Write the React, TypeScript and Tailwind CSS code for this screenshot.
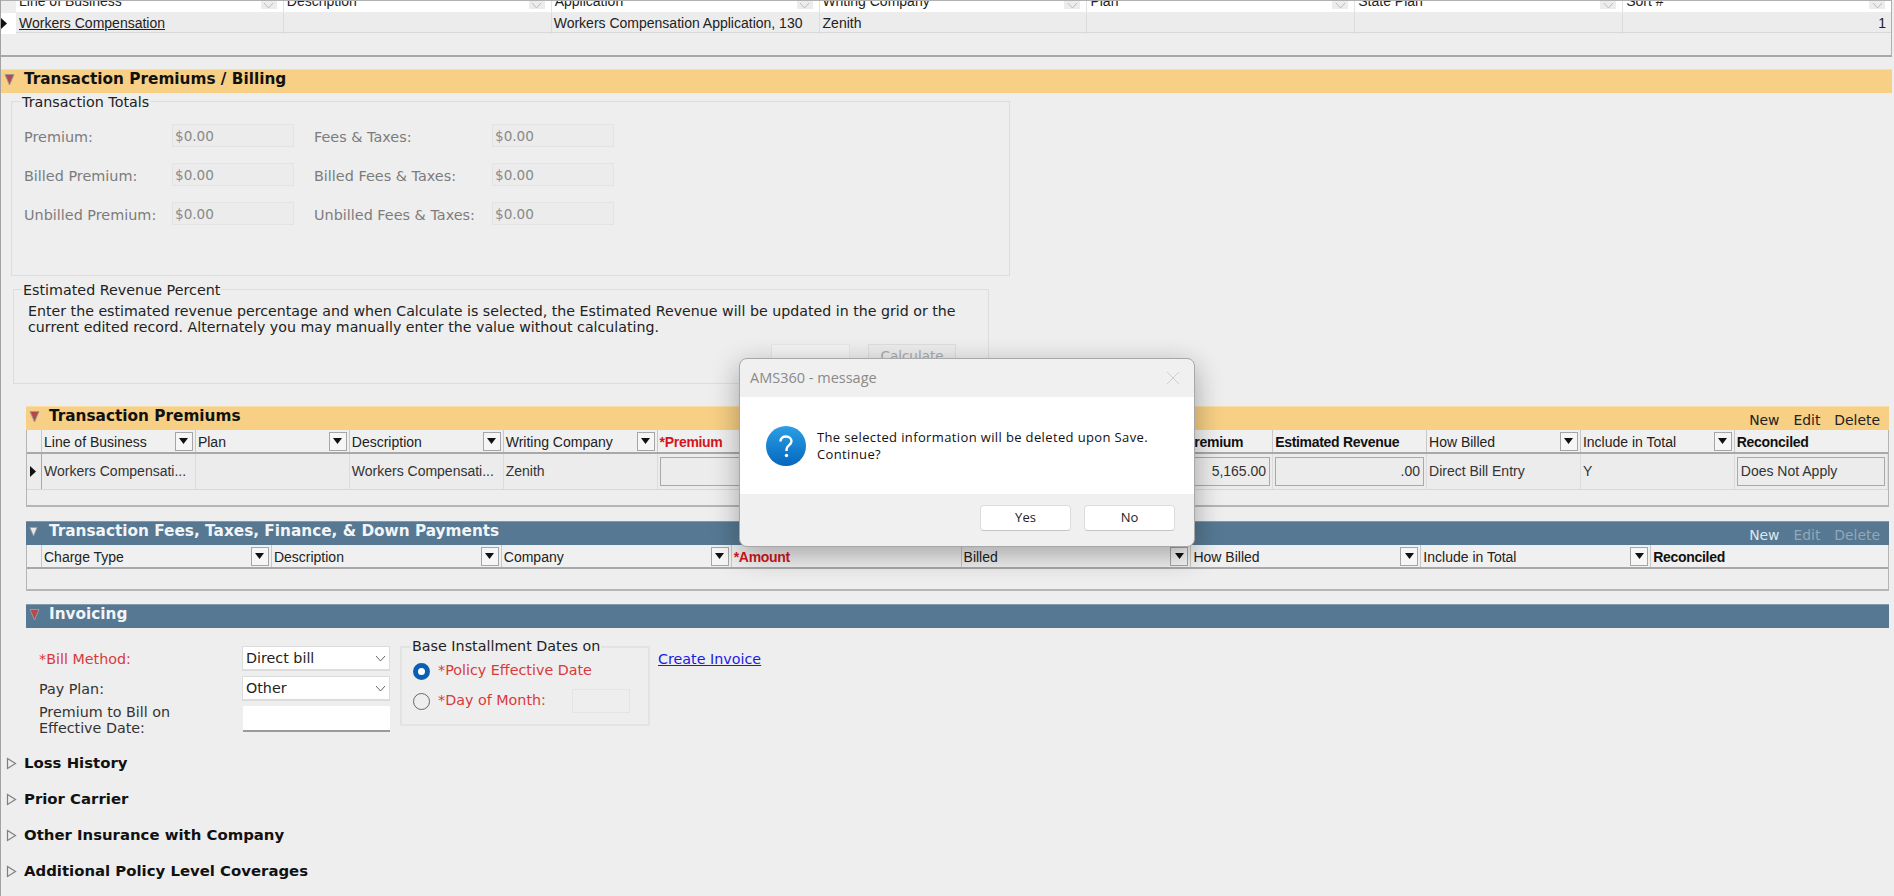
import React from "react";

const Tri = ({ fill = "#b5484a", small }: { fill?: string; small?: boolean }) => (
  <svg width={small ? 9 : 11} height={small ? 11 : 13} viewBox="0 0 11 13">
    <path d="M1 1.5 H10 L5.5 12 Z" fill={fill} stroke="#9a9a9a" strokeWidth="1" />
  </svg>
);

const Open = () => (
  <svg width="11" height="13" viewBox="0 0 11 13" className="shrink-0">
    <path d="M1.5 1.5 L9.5 6.5 L1.5 11.5 Z" fill="#eeeeee" stroke="#7f7f7f" strokeWidth="1.2" />
  </svg>
);

const Filter = () => (
  <span className="flex h-[19px] w-[18px] shrink-0 items-center justify-center border border-[#a6a6a6] bg-[#f6f6f6]">
    <svg width="9" height="6" viewBox="0 0 9 6"><path d="M0 0 H9 L4.5 6 Z" fill="#111" /></svg>
  </span>
);

const Chevron = ({ c = "#666" }: { c?: string }) => (
  <svg width="11" height="7" viewBox="0 0 11 7" fill="none" stroke={c} strokeWidth="1"><path d="M1 1 L5.5 6 L10 1" /></svg>
);

const Caret = () => (
  <svg width="6" height="11" viewBox="0 0 6 11"><path d="M0 0 L6 5.5 L0 11 Z" fill="#111" /></svg>
);

const Input = ({ v }: { v: string }) => (
  <div className="flex h-[23px] w-[122px] items-center border border-[#e3e3e3] bg-[#ececec] pl-[2px] pt-[1px] font-['DejaVu_Sans',sans-serif] text-[13.6px] text-[#8a8a8a]">{v}</div>
);

const Label = ({ t }: { t: string }) => (
  <div className="flex h-[23px] items-center pt-[4px] font-['DejaVu_Sans',sans-serif] text-[14.4px] text-[#7c7c7c]">{t}</div>
);

type Col = { t: string; f?: boolean; b?: boolean; r?: boolean; e?: boolean };

const HeadCell = ({ c }: { c: Col }) => (
  <div className={"flex h-[22px] items-center overflow-hidden border-r border-[#c8c8c8] pl-[2px] last:border-r-0 " + (c.e ? "justify-end pr-[29px]" : "justify-between pr-[2px]")}>
    <span className={"mt-[3px] whitespace-nowrap text-[14px] " + (c.r ? "font-bold tracking-[-0.3px] text-[#d3161c]" : c.b ? "font-bold tracking-[-0.3px] text-[#111]" : "text-[#222]")}>{c.t}</span>
    {c.f && <Filter />}
  </div>
);

const Band = ({ title, blue, tri, links }: { title: string; blue?: boolean; tri: React.ReactNode; links?: React.ReactNode }) => (
  <div className={"flex h-[24px] items-center justify-between border-t font-['DejaVu_Sans',sans-serif] " + (blue ? "border-[#7d9ab0] bg-[#567892]" : "border-[#f9dca6] bg-[#f7cf85]")}>
    <div className={"flex items-center " + (blue ? "-mt-[5px]" : "-mt-[4px]")}>
      <span className="flex w-[23px] pl-[3px]">{tri}</span>
      <span className={"text-[15.3px] font-bold " + (blue ? "text-[#f2f5f7]" : "text-[#111]")}>{title}</span>
    </div>
    {links}
  </div>
);

const Section = ({ title }: { title: string }) => (
  <div className="flex h-[36px] items-center gap-[7px] pl-[5px] font-['DejaVu_Sans',sans-serif]">
    <Open />
    <span className="text-[14.9px] font-bold text-[#111]">{title}</span>
  </div>
);

const premCols: Col[] = [
  { t: "Line of Business", f: true },
  { t: "Plan", f: true },
  { t: "Description", f: true },
  { t: "Writing Company", f: true },
  { t: "*Premium", r: true },
  { t: "" },
  { t: "" },
  { t: "Premium", b: true, e: true },
  { t: "Estimated Revenue", b: true },
  { t: "How Billed", f: true },
  { t: "Include in Total", f: true },
  { t: "Reconciled", b: true },
];

const feeCols: Col[] = [
  { t: "Charge Type", f: true },
  { t: "Description", f: true },
  { t: "Company", f: true },
  { t: "*Amount", r: true },
  { t: "Billed", f: true },
  { t: "How Billed", f: true },
  { t: "Include in Total", f: true },
  { t: "Reconciled", b: true },
];

const topCols = ["Line of Business", "Description", "Application", "Writing Company", "Plan", "State Plan", "Sort #"];

const Box = ({ t, right }: { t: string; right?: boolean }) => (
  <div className="flex h-full items-center border-r border-[#dcdcdc] px-[2px] py-[3px]">
    <div className={"flex h-full w-full items-center border border-[#a9a9a9] bg-[#ececec] px-[3px] text-[14px] text-[#333] " + (right ? "justify-end" : "")}>{t}</div>
  </div>
);

const Txt = ({ t }: { t: string }) => (
  <div className="flex h-full items-center overflow-hidden whitespace-nowrap border-r border-[#dcdcdc] pl-[2px] text-[14px] text-[#333]">{t}</div>
);

export default function App() {
  return (
    <div className="relative h-[896px] w-[1894px] overflow-hidden border-l border-[#a3a3a3] bg-[#eeeeee] font-['Liberation_Sans',Arial,sans-serif]">
      {/* top grid */}
      <div className="mr-[2px] h-[57px] overflow-hidden border-r border-b-2 border-t border-[#b0b0b0] border-b-[#a8a8a8]">
        <div className="grid h-[11px] grid-cols-[15px_repeat(7,1fr)] overflow-hidden bg-white">
          <div className="bg-[#eeeeee]" />
          {topCols.map((c) => (
            <div key={c} className="relative flex h-[11px] justify-between overflow-hidden border-r border-[#e2e2e2] pl-[3px] pr-[6px] last:border-r-0">
              <span className="-mt-[8px] whitespace-nowrap text-[14px] leading-[16px] text-[#222]">{c}</span>
              <span className="flex h-[8px] w-[16px] items-center justify-center bg-[#ececec]">
                <Chevron c="#bdbdbd" />
              </span>
            </div>
          ))}
        </div>
        <div className="grid h-[21px] grid-cols-[15px_repeat(7,1fr)] border-b border-[#d8d8d8] bg-[#ececec] pt-[1px] text-[14px] text-[#222]">
          <div className="flex items-center bg-white"><Caret /></div>
          <div className="flex items-center border-r border-[#dcdcdc] pl-[3px] underline">Workers Compensation</div>
          <div className="border-r border-[#dcdcdc]" />
          <div className="flex items-center border-r border-[#dcdcdc] pl-[2px]">Workers Compensation Application, 130</div>
          <div className="flex items-center border-r border-[#dcdcdc] pl-[3px]">Zenith</div>
          <div className="border-r border-[#dcdcdc]" />
          <div className="border-r border-[#dcdcdc]" />
          <div className="flex items-center justify-end pr-[5px]">1</div>
        </div>
      </div>

      {/* main band */}
      <div className="mr-[2px] mt-[12px]">
        <Band title="Transaction Premiums / Billing" tri={<Tri />} />
      </div>

      <div className="font-['DejaVu_Sans',sans-serif]">
        {/* totals */}
        <div className="ml-[10px] mt-[8px] h-[175px] w-[999px] border border-[#dddddd] pl-[12px]">
          <div className="-ml-[3px] -mt-[9px] h-[18px] w-fit bg-[#eeeeee] px-[1px] text-[14.3px] leading-[18px] text-[#222]">Transaction Totals</div>
          <div className="mt-[13px] grid grid-cols-[148px_122px_198px_122px] gap-y-[16px]">
            <Label t="Premium:" /><Input v="$0.00" />
            <div className="pl-[20px]"><Label t="Fees & Taxes:" /></div><Input v="$0.00" />
            <Label t="Billed Premium:" /><Input v="$0.00" />
            <div className="pl-[20px]"><Label t="Billed Fees & Taxes:" /></div><Input v="$0.00" />
            <Label t="Unbilled Premium:" /><Input v="$0.00" />
            <div className="pl-[20px]"><Label t="Unbilled Fees & Taxes:" /></div><Input v="$0.00" />
          </div>
        </div>

        {/* estimated */}
        <div className="ml-[12px] mt-[13px] h-[95px] w-[976px] border border-[#dddddd] pl-[14px]">
          <div className="-ml-[6px] -mt-[9px] h-[18px] w-fit bg-[#eeeeee] px-[1px] text-[14.3px] leading-[18px] text-[#222]">Estimated Revenue Percent</div>
          <p className="mt-[4px] w-[960px] text-[14.2px] leading-[16px] text-[#222]">
            Enter the estimated revenue percentage and when Calculate is selected, the Estimated Revenue will be updated in the grid or the current edited record. Alternately you may manually enter the value without calculating.
          </p>
          <div className="mt-[9px] flex gap-[18px] pl-[743px]">
            <div className="h-[24px] w-[79px] border border-[#e6e6e6] bg-[#f4f4f4]" />
            <div className="flex h-[24px] w-[88px] items-center justify-center border border-[#dddddd] bg-[#ececec] text-[13.5px] text-[#aaaaaa]">Calculate</div>
          </div>
        </div>
      </div>

      {/* premiums */}
      <div className="ml-[25px] mr-[5px] mt-[22px]">
        <Band
          title="Transaction Premiums"
          tri={<Tri />}
          links={
            <div className="mt-[3px] flex gap-[14px] pr-[9px] text-[13.9px] text-[#222]"><span>New</span><span>Edit</span><span>Delete</span></div>
          }
        />
        <div className="h-[77px] border-b-2 border-l border-r border-[#b5b5b5]">
          <div className="grid h-[24px] grid-cols-[15px_repeat(11,153.9px)_1fr] border-b-2 border-[#a8a8a8] bg-[#f0f0f0]">
            <div className="border-r border-[#c8c8c8]" />
            {premCols.map((c, i) => <HeadCell key={i} c={c} />)}
          </div>
          <div className="grid h-[36px] grid-cols-[15px_repeat(11,153.9px)_1fr] border-b border-[#d8d8d8] bg-[#ececec]">
            <div className="flex items-center border-r border-[#a8a8a8] pl-[3px]"><Caret /></div>
            <Txt t="Workers Compensati..." />
            <Txt t="" />
            <Txt t="Workers Compensati..." />
            <Txt t="Zenith" />
            <Box t="" right />
            <Box t="" right />
            <Box t="" right />
            <Box t="5,165.00" right />
            <Box t=".00" right />
            <Txt t="Direct Bill Entry" />
            <Txt t="Y" />
            <Box t="Does Not Apply" />
          </div>
        </div>
      </div>

      {/* fees */}
      <div className="ml-[25px] mr-[5px] mt-[14px]">
        <Band
          title="Transaction Fees, Taxes, Finance, & Down Payments"
          blue
          tri={<Tri fill="#e9e9e9" small />}
          links={
            <div className="mt-[3px] flex gap-[14px] pr-[9px] text-[13.9px] text-[#92a7b7]"><span className="text-[#dfe7ec]">New</span><span>Edit</span><span>Delete</span></div>
          }
        />
        <div className="h-[46px] border-b-2 border-l border-r border-[#b5b5b5]">
          <div className="grid h-[24px] grid-cols-[15px_repeat(7,229.9px)_1fr] border-b-2 border-[#a8a8a8] bg-[#f0f0f0]">
            <div className="border-r border-[#c8c8c8]" />
            {feeCols.map((c, i) => <HeadCell key={i} c={c} />)}
          </div>
        </div>
      </div>

      {/* invoicing */}
      <div className="ml-[25px] mr-[5px] mt-[13px]">
        <Band title="Invoicing" blue tri={<Tri />} />
      </div>

      <div className="ml-[38px] mt-[18px] flex items-start font-['DejaVu_Sans',sans-serif] text-[14.3px]">
        <div className="grid w-[351px] grid-cols-[203px_148px] gap-y-[5px]">
          <div className="flex h-[25px] items-center pt-[2px] text-[#d9393b]">*Bill Method:</div>
          <div className="flex h-[25px] items-center justify-between border border-b-2 border-[#dcdcdc] bg-white px-[3px] pt-[1px] text-[#222]">Direct bill<Chevron /></div>
          <div className="flex h-[25px] items-center pt-[2px] text-[#333]">Pay Plan:</div>
          <div className="flex h-[25px] items-center justify-between border border-b-2 border-[#dcdcdc] bg-white px-[3px] pt-[1px] text-[#222]">Other<Chevron /></div>
          <div className="-mt-[2px] w-[165px] leading-[16px] text-[#333]">Premium to Bill on Effective Date:</div>
          <div className="ml-[1px] h-[26px] w-[147px] border-b-2 border-[#9a9a9a] bg-white" />
        </div>
        <div className="ml-[10px] h-[80px] w-[250px] border-2 border-[#e3e3e3] pl-[11px]">
          <div className="-ml-[2px] -mt-[11px] h-[18px] w-fit bg-[#eeeeee] px-[1px] leading-[18px] text-[#222]">Base Installment Dates on</div>
          <div className="mt-[4px] flex h-[24px] items-center gap-[8px] text-[#d9393b]">
            <span className="h-[17px] w-[17px] rounded-full border-[5px] border-[#0a5fb4] bg-white" />*Policy Effective Date
          </div>
          <div className="mt-[6px] flex h-[24px] items-center gap-[8px] text-[#d9393b]">
            <span className="h-[17px] w-[17px] rounded-full border-[1.5px] border-[#666] bg-[#eeeeee]" />
            <span className="w-[126px]">*Day of Month:</span>
            <span className="h-[24px] w-[58px] border border-[#e4e4e4]" />
          </div>
        </div>
        <a className="ml-[8px] mt-[3px] text-[#1a1ae6] underline">Create Invoice</a>
      </div>

      <div className="mt-[9px]">
        <Section title="Loss History" />
        <Section title="Prior Carrier" />
        <Section title="Other Insurance with Company" />
        <Section title="Additional Policy Level Coverages" />
      </div>

      {/* dialog */}
      <div className="absolute left-[738px] top-[358px] flex h-[189px] w-[456px] flex-col overflow-hidden rounded-[8px] border border-[#a8a8a8] bg-[#f0f0f0] font-['Open_Sans',sans-serif] shadow-[0_8px_28px_rgba(0,0,0,0.32)]">
        <div className="flex h-[38px] items-center justify-between pl-[10px] pr-[14px] text-[14.5px] text-[#8a8a8a]">
          <span>AMS360 - message</span>
          <svg width="14" height="14" viewBox="0 0 14 14" stroke="#cfcfcf" strokeWidth="1"><path d="M1 1 L13 13 M13 1 L1 13" /></svg>
        </div>
        <div className="flex h-[97px] items-center bg-white pl-[26px]">
          <svg width="40" height="40" viewBox="0 0 40 40" className="shrink-0">
            <defs>
              <linearGradient id="qb" x1="0" y1="0" x2="0" y2="1">
                <stop offset="0" stopColor="#2a9fe6" />
                <stop offset="1" stopColor="#0567bd" />
              </linearGradient>
            </defs>
            <circle cx="20" cy="20" r="20" fill="url(#qb)" />
            <path d="M14.5 15.5 C14.5 12 17 10.5 20 10.5 C23.2 10.5 25.5 12.4 25.5 15.2 C25.5 18.8 20.5 19.4 20.5 23.5 V25" fill="none" stroke="#fff" strokeWidth="2.4" />
            <circle cx="20.5" cy="29.5" r="1.7" fill="#fff" />
          </svg>
          <p className="ml-[11px] w-[345px] text-[13px] leading-[17px] tracking-[0.37px] text-[#111]">The selected information will be deleted upon Save. Continue?</p>
        </div>
        <div className="flex flex-1 items-center justify-end gap-[13px] pb-[4px] pr-[19px] text-[13px] text-[#222]">
          <button className="h-[26px] w-[91px] rounded-[4px] border border-[#dcdcdc] border-b-[#c4c4c4] bg-white">Yes</button>
          <button className="h-[26px] w-[91px] rounded-[4px] border border-[#dcdcdc] border-b-[#c4c4c4] bg-white">No</button>
        </div>
      </div>
    </div>
  );
}
